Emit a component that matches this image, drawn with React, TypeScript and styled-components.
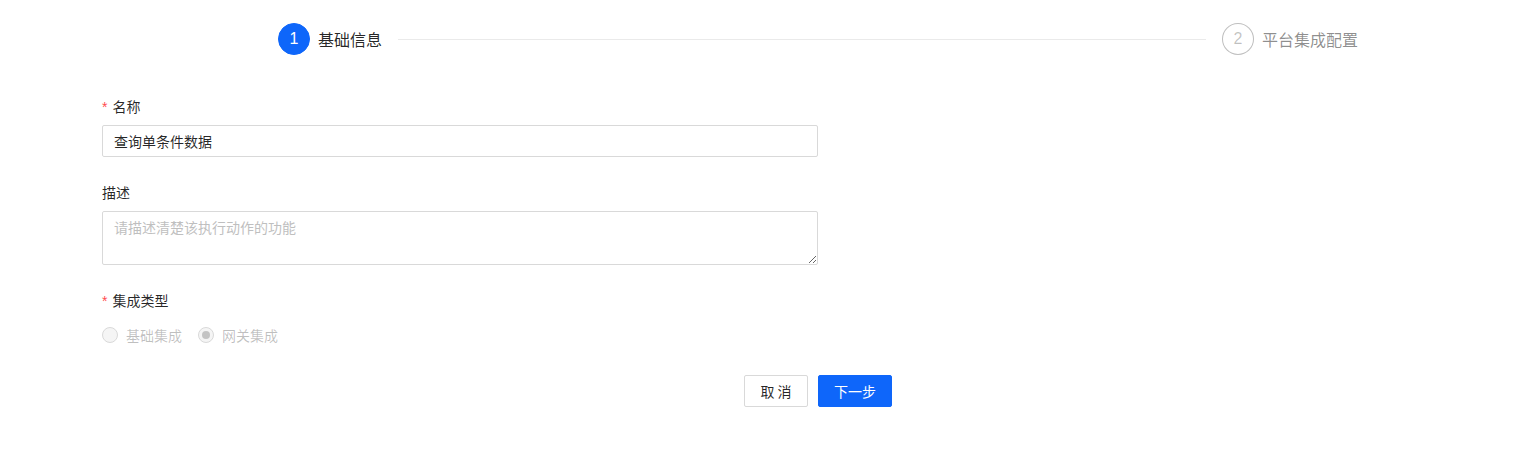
import React from "react";
import styled, { createGlobalStyle } from "styled-components";

const GlobalStyle = createGlobalStyle`
  html, body {
    margin: 0;
    padding: 0;
    background: #fff;
    font-family: "Noto Sans CJK SC", "Noto Sans", "Liberation Sans", sans-serif;
    color: rgba(0, 0, 0, 0.85);
  }
  * { box-sizing: border-box; }
`;

const Page = styled.div`
  width: 1518px;
  height: 461px;
  padding-top: 23px;
`;

const Steps = styled.div`
  display: flex;
  align-items: center;
  margin-left: 278px;
  width: 1080px;
  height: 32px;
`;

const StepItem = styled.div<{ $last?: boolean }>`
  display: flex;
  align-items: center;
  flex: ${(p) => (p.$last ? "none" : "1")};
`;

const StepIcon = styled.div<{ $active?: boolean }>`
  width: 32px;
  height: 32px;
  border-radius: 50%;
  display: flex;
  align-items: center;
  justify-content: center;
  font-size: 16px;
  font-family: "Liberation Sans", "Noto Sans CJK SC", sans-serif;
  background: ${(p) => (p.$active ? "#0e66fa" : "#fff")};
  color: ${(p) => (p.$active ? "#fff" : "rgba(0,0,0,0.25)")};
  border: 1px solid ${(p) => (p.$active ? "#0e66fa" : "rgba(0,0,0,0.25)")};
  flex: none;
`;

const StepTitle = styled.div<{ $active?: boolean }>`
  margin-left: 8px;
  font-size: 16px;
  line-height: 32px;
  color: ${(p) => (p.$active ? "rgba(0,0,0,0.85)" : "rgba(0,0,0,0.45)")};
  white-space: nowrap;
`;

const StepLine = styled.div`
  flex: 1;
  height: 1px;
  background: #eaeaea;
  margin: 0 16px;
`;

const Form = styled.form`
  margin: 40px 0 0 102px;
  width: 716px;
`;

const Field = styled.div`
  margin-bottom: 24px;
`;

const Label = styled.label<{ $required?: boolean }>`
  display: block;
  font-size: 14px;
  line-height: 22px;
  height: 22px;
  margin-bottom: 8px;
  color: rgba(0, 0, 0, 0.85);
  &::before {
    content: ${(p) => (p.$required ? '"*"' : "none")};
    color: #ff4d4f;
    margin-right: 5px;
    font-family: SimSun, "Liberation Sans", sans-serif;
    font-size: 14px;
  }
`;

const Input = styled.input`
  display: block;
  width: 100%;
  height: 32px;
  padding: 4px 11px;
  border: 1px solid #d9d9d9;
  border-radius: 2px;
  font-size: 14px;
  font-family: inherit;
  color: rgba(0, 0, 0, 0.85);
  outline: none;
`;

const TextArea = styled.textarea`
  display: block;
  width: 100%;
  height: 54px;
  padding: 4px 11px;
  border: 1px solid #d9d9d9;
  border-radius: 2px;
  font-size: 14px;
  line-height: 22px;
  font-family: inherit;
  outline: none;
  &::placeholder {
    color: #bfbfbf;
  }
`;

const RadioGroup = styled.div`
  display: flex;
  align-items: center;
  height: 32px;
  gap: 16px;
`;

const RadioLabel = styled.label`
  display: flex;
  align-items: center;
  font-size: 14px;
  color: rgba(0, 0, 0, 0.25);
  cursor: not-allowed;
`;

const RadioDot = styled.span<{ $checked?: boolean }>`
  position: relative;
  width: 16px;
  height: 16px;
  border-radius: 50%;
  border: 1px solid #d9d9d9;
  background: #f5f5f5;
  margin-right: 8px;
  &::after {
    content: "";
    display: ${(p) => (p.$checked ? "block" : "none")};
    position: absolute;
    left: 3px;
    top: 3px;
    width: 8px;
    height: 8px;
    border-radius: 50%;
    background: rgba(0, 0, 0, 0.2);
  }
`;

const Actions = styled.div`
  display: flex;
  gap: 10px;
  margin-left: 744px;
`;

const Button = styled.button<{ $primary?: boolean }>`
  height: 32px;
  min-width: 64px;
  padding: 4px 15px;
  font-size: 14px;
  font-family: inherit;
  border-radius: 2px;
  border: 1px solid ${(p) => (p.$primary ? "#0e66fa" : "#d9d9d9")};
  background: ${(p) => (p.$primary ? "#0e66fa" : "#fff")};
  color: ${(p) => (p.$primary ? "#fff" : "rgba(0,0,0,0.85)")};
  cursor: pointer;
`;

const App: React.FC = () => {
  return (
    <>
      <GlobalStyle />
      <Page>
        <Steps>
          <StepItem>
            <StepIcon $active>1</StepIcon>
            <StepTitle $active>基础信息</StepTitle>
            <StepLine />
          </StepItem>
          <StepItem $last>
            <StepIcon>2</StepIcon>
            <StepTitle>平台集成配置</StepTitle>
          </StepItem>
        </Steps>
        <Form onSubmit={(e) => e.preventDefault()}>
          <Field>
            <Label $required>名称</Label>
            <Input defaultValue="查询单条件数据" />
          </Field>
          <Field>
            <Label>描述</Label>
            <TextArea placeholder="请描述清楚该执行动作的功能" />
          </Field>
          <Field>
            <Label $required>集成类型</Label>
            <RadioGroup>
              <RadioLabel>
                <RadioDot />
                基础集成
              </RadioLabel>
              <RadioLabel>
                <RadioDot $checked />
                网关集成
              </RadioLabel>
            </RadioGroup>
          </Field>
        </Form>
        <Actions>
          <Button type="button">取 消</Button>
          <Button type="button" $primary>下一步</Button>
        </Actions>
      </Page>
    </>
  );
};

export default App;
